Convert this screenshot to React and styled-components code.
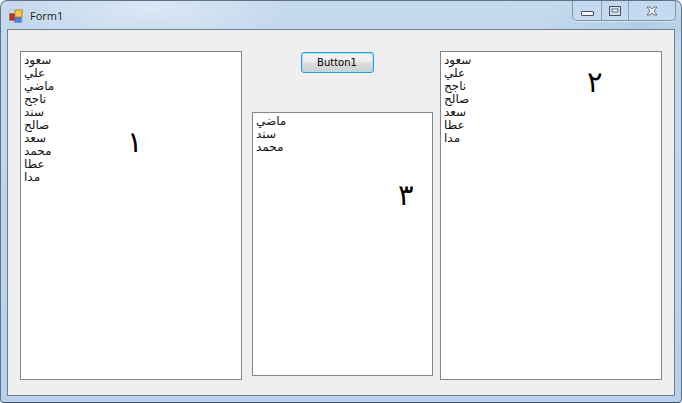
import React from "react";
import styled, { createGlobalStyle } from "styled-components";

const GlobalStyle = createGlobalStyle`
  html, body {
    margin: 0;
    padding: 0;
    background: #fff;
  }
`;

const FormWindow = styled.div`
  width: 682px;
  height: 403px;
  box-sizing: border-box;
  display: flex;
  flex-direction: column;
  padding: 0 6px 6px 6px;
  border: 1px solid #5f7286;
  border-bottom-color: #46505c;
  border-radius: 7px 7px 4px 4px;
  background:
    radial-gradient(ellipse 130px 40px at 150px 6px, rgba(226, 236, 246, 0.75), transparent),
    radial-gradient(ellipse 120px 26px at 640px 24px, rgba(170, 198, 226, 0.65), transparent),
    linear-gradient(180deg, #c6daee 0%, #bcd4ec 60%, #b8d2ec 100%);
  overflow: hidden;
`;

const TitleBar = styled.div`
  height: 28px;
  flex: none;
  display: flex;
  align-items: flex-start;
  justify-content: space-between;
`;

const TitleGroup = styled.div`
  display: flex;
  align-items: center;
  gap: 7px;
  padding-top: 7px;
  padding-left: 2px;
`;

const TitleText = styled.span`
  font-family: "Open Sans", "Noto Sans", sans-serif;
  font-size: 11px;
  line-height: 16px;
  color: #1a1a1a;
`;

const CaptionButtons = styled.div`
  display: flex;
  height: 19px;
  margin-right: -1px;
  border: 1px solid #7f93a8;
  border-top: none;
  border-radius: 0 0 5px 5px;
  background: linear-gradient(180deg, #c2d8ee, #c6daf0);
  box-shadow: 0 1px 0 rgba(255, 255, 255, 0.45);
`;

const CaptionButton = styled.div`
  width: ${(props) => props.$width}px;
  display: flex;
  align-items: center;
  justify-content: center;
  box-sizing: border-box;
  border-left: ${(props) => (props.$first ? "none" : "1px solid #8ea3b9")};
`;

const Client = styled.div`
  flex: 1;
  display: flex;
  align-items: flex-start;
  box-sizing: border-box;
  padding: 21px 12px 0 12px;
  background: #efefef;
  border: 1px solid #6f7f90;
`;

const ListBox = styled.div`
  position: relative;
  box-sizing: border-box;
  width: ${(props) => props.$width}px;
  height: ${(props) => props.$height}px;
  padding: 2px 3px;
  flex: none;
  background: #fff;
  border: 1px solid #82878e;
`;

const ListItem = styled.div`
  font-family: "DejaVu Sans", sans-serif;
  font-size: 12px;
  line-height: 13px;
  height: 13px;
  color: #111;
  text-align: left;
  white-space: nowrap;
`;

const BigNumber = styled.span`
  position: absolute;
  left: ${(props) => props.$left}px;
  top: ${(props) => props.$top}px;
  font-family: "DejaVu Sans", sans-serif;
  font-size: 29px;
  font-weight: normal;
  line-height: 30px;
  color: #000;
`;

const MiddleColumn = styled.div`
  width: 181px;
  flex: none;
  margin: 0 7px 0 10px;
  display: flex;
  flex-direction: column;
  align-items: center;
`;

const PushButton = styled.button`
  box-sizing: border-box;
  width: 73px;
  height: 21px;
  margin: 1px 0 39px -11px;
  padding: 0;
  font-family: "DejaVu Sans", sans-serif;
  font-size: 10px;
  color: #000;
  border: 1px solid #2f9bd0;
  border-radius: 3px;
  background: linear-gradient(180deg, #f4f4f4 0%, #ebebeb 48%, #dcdcdc 52%, #cfcfcf 100%);
  box-shadow: inset 0 0 0 1px #a6e2f6;
`;

const AppIcon = () => (
  <svg width="14" height="14" viewBox="0 0 14 14">
    <rect x="0.5" y="0.5" width="13" height="13" fill="none" stroke="#c4ccd4" />
    <rect x="6" y="1" width="7" height="7" fill="#f6c84c" stroke="#b98a20" />
    <rect x="1" y="5" width="4" height="6" fill="#d8322a" stroke="#8a1c18" />
    <rect x="6" y="9" width="6" height="4" fill="#4f8fe0" stroke="#2c62ac" />
  </svg>
);

const MinimizeIcon = () => (
  <svg width="13" height="10" viewBox="0 0 13 10">
    <rect x="0.5" y="5.5" width="12" height="4" rx="0.5" fill="#f4f6f8" stroke="#46525e" />
  </svg>
);

const MaximizeIcon = () => (
  <svg width="12" height="10" viewBox="0 0 12 10">
    <rect x="0.5" y="0.5" width="11" height="9" fill="#d4e2f0" stroke="#46525e" />
    <rect x="3" y="3" width="6" height="3" fill="#eef3f8" stroke="#46525e" strokeWidth="0.8" />
  </svg>
);

const CloseIcon = () => (
  <svg width="12" height="10" viewBox="0 0 12 10">
    <path d="M1 1h3l2 2 2-2h3L8 5l3 4H8L6 7 4 9H1l3-4z" fill="#f2f4f6" stroke="#5a6672" strokeWidth="0.9" />
  </svg>
);

const firstList = ["سعود", "علي", "ماضي", "ناجح", "سند", "صالح", "سعد", "محمد", "عطا", "مدا"];
const secondList = ["سعود", "علي", "ناجح", "صالح", "سعد", "عطا", "مدا"];
const thirdList = ["ماضي", "سند", "محمد"];

const Items = ({ names }) => names.map((name) => <ListItem key={name}>{name}</ListItem>);

export default function App() {
  return (
    <>
      <GlobalStyle />
      <FormWindow>
        <TitleBar>
          <TitleGroup>
            <AppIcon />
            <TitleText>Form1</TitleText>
          </TitleGroup>
          <CaptionButtons>
            <CaptionButton $first $width={28}>
              <MinimizeIcon />
            </CaptionButton>
            <CaptionButton $width={27}>
              <MaximizeIcon />
            </CaptionButton>
            <CaptionButton $width={47}>
              <CloseIcon />
            </CaptionButton>
          </CaptionButtons>
        </TitleBar>
        <Client>
          <ListBox $width={222} $height={329}>
            <Items names={firstList} />
            <BigNumber $left={106} $top={75}>١</BigNumber>
          </ListBox>
          <MiddleColumn>
            <PushButton>Button1</PushButton>
            <ListBox $width={181} $height={264}>
              <Items names={thirdList} />
              <BigNumber $left={145} $top={67}>٣</BigNumber>
            </ListBox>
          </MiddleColumn>
          <ListBox $width={222} $height={329}>
            <Items names={secondList} />
            <BigNumber $left={146} $top={15}>٢</BigNumber>
          </ListBox>
        </Client>
      </FormWindow>
    </>
  );
}
